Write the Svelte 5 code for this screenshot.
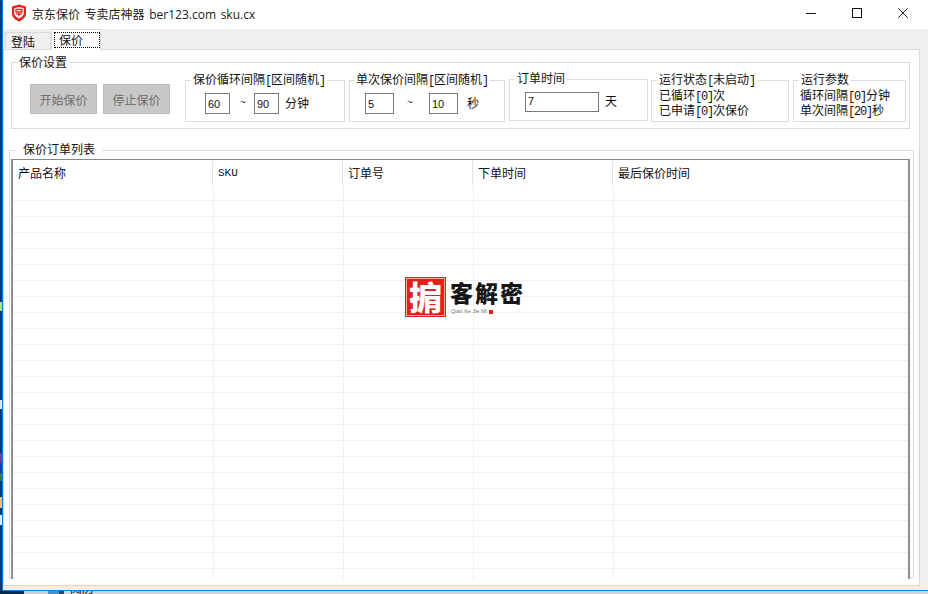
<script>
  const columns = [
    { label: "产品名称", width: 200 },
    { label: "SKU", width: 130, mono: true },
    { label: "订单号", width: 130 },
    { label: "下单时间", width: 140 },
    { label: "最后保价时间", width: 295 },
  ];
  const rows = Array.from({ length: 24 }, (_, i) => i);
  const bodyCols = [201, 130, 130, 140, 295];

  // SimSun-style half width latin: split ascii runs off so they get the mono font
  function segs(text) {
    return text.split(/([\x21-\x7e]+)/).filter(Boolean);
  }
  const isAscii = (s) => /^[\x21-\x7e]+$/.test(s);
</script>

{#snippet label(text)}
  {#each segs(text) as s}{#if isAscii(s)}<span class="m">{s}</span>{:else}{s}{/if}{/each}
{/snippet}

<div class="screen">
  <div class="window">
    <header class="titlebar">
      <svg class="appicon" width="16" height="18" viewBox="0 0 16 18">
        <path d="M1 2.5 L8 .5 L15 2.5 V10 C15 13.5 11 16 8 17.5 C5 16 1 13.5 1 10 Z" fill="#e2231a" />
        <path d="M3.2 4.2 L8 3 L12.8 4.2 V9.6 C12.8 11.8 10 13.6 8 14.6 C6 13.6 3.2 11.8 3.2 9.6 Z" fill="#fff" />
        <path d="M5 5.5 H11 V8 H5 Z M8 8 V12.5 M5.2 10 H10.8" stroke="#d8342a" stroke-width="1.3" fill="none" />
      </svg>
      <span class="title">京东保价 专卖店神器 ber123.com sku.cx</span>
      <div class="controls">
        <svg width="10" height="10" viewBox="0 0 10 10" shape-rendering="crispEdges"><path d="M0 5.5 H10" stroke="#111" /></svg>
        <svg width="10" height="10" viewBox="0 0 10 10" shape-rendering="crispEdges"><rect x=".5" y=".5" width="9" height="9" fill="none" stroke="#111" /></svg>
        <svg width="10" height="10" viewBox="0 0 10 10"><path d="M.3 .3 L9.7 9.7 M9.7 .3 L.3 9.7" stroke="#222" stroke-width="1" /></svg>
      </div>
    </header>

    <div class="client">
      <nav class="tabs">
        <div class="tab">登陆</div>
        <div class="tab active"><span class="focus">保价</span></div>
      </nav>

      <main class="page">
        <fieldset class="group settings">
          <legend>保价设置</legend>
          <div class="settings-row">
            <button class="btn" disabled>开始保价</button>
            <button class="btn" disabled>停止保价</button>

            <fieldset class="group sub g1">
              <legend>{@render label("保价循环间隔[区间随机]")}</legend>
              <div class="range">
                <input class="w25" value="60" />
                <span class="tilde">~</span>
                <input class="w25" value="90" />
                <span class="unit">分钟</span>
              </div>
            </fieldset>

            <fieldset class="group sub g2">
              <legend>{@render label("单次保价间隔[区间随机]")}</legend>
              <div class="range">
                <input class="w29" value="5" />
                <span class="tilde">~</span>
                <input class="w29" value="10" />
                <span class="unit">秒</span>
              </div>
            </fieldset>

            <fieldset class="group sub g3">
              <legend>订单时间</legend>
              <div class="range">
                <input class="w74" value="7" />
                <span class="unit">天</span>
              </div>
            </fieldset>

            <fieldset class="group sub g4">
              <legend>{@render label("运行状态[未启动]")}</legend>
              <p>{@render label("已循环[0]次")}</p>
              <p>{@render label("已申请[0]次保价")}</p>
            </fieldset>

            <fieldset class="group sub g5">
              <legend>运行参数</legend>
              <p>{@render label("循环间隔[0]分钟")}</p>
              <p>{@render label("单次间隔[20]秒")}</p>
            </fieldset>
          </div>
        </fieldset>

        <fieldset class="group orders">
          <legend>保价订单列表</legend>
          <div class="list">
            <div class="head">
              {#each columns as col}
                <div class="hcell" class:mono={col.mono} style="width: {col.width}px">{col.label}</div>
              {/each}
            </div>
            <div class="body">
              {#each rows as r}
                <div class="row">
                  {#each bodyCols as w}<div class="cell" style="width: {w}px"></div>{/each}
                </div>
              {/each}
              <div class="row tail">
                {#each bodyCols as w}<div class="cell" style="width: {w}px"></div>{/each}
              </div>
            </div>

            <div class="watermark">
              <div class="seal">掮</div>
              <div class="brand">
                <div class="brand-name">客解密</div>
                <div class="brand-sub">Qian Ke Jie Mi <i></i></div>
              </div>
            </div>
          </div>
        </fieldset>
      </main>
    </div>
  </div>

  <div class="desktop">
    <span class="d-navy"></span>
    <span class="d-gray"></span>
    <span class="d-blue"></span>
    <span class="d-dark"></span>
    <span class="d-text">阅历</span>
  </div>
</div>

<style>
  :global(body) {
    margin: 0;
    overflow: hidden;
  }

  .screen {
    width: 928px;
    height: 594px;
    display: flex;
    flex-direction: column;
    overflow: hidden;
    font-family: "Noto Sans CJK SC", "Liberation Sans", sans-serif;
    font-size: 12px;
    color: #111;
    background: #d6d6d6;
  }

  .window {
    height: 591px;
    box-sizing: border-box;
    display: flex;
    flex-direction: column;
    border-left: 3px solid #0078d7;
    border-bottom: 1px solid #0f84dc;
    position: relative;
  }

  /* bit of desktop showing behind the window edge */
  .window::before {
    content: "";
    position: absolute;
    left: -3px;
    top: 0;
    bottom: -1px;
    width: 2px;
    background: linear-gradient(
      #0b3a72 0 302px, #b9e07a 302px 311px, #0b3a72 311px 400px, #dfe6ee 400px 409px,
      #0b3a72 409px 453px, #6c3f8a 453px 463px, #1c34c8 463px 473px, #1d8a2c 473px 481px,
      #0b3a72 481px 497px, #f0c080 497px 508px, #0b3a72 508px 515px, #e8edf2 515px 525px,
      #0b3a72 525px
    );
  }

  .titlebar {
    height: 29px;
    flex: none;
    display: flex;
    align-items: center;
    background: #fff;
    padding-left: 8px;
  }

  .appicon {
    margin-top: -3px;
  }

  .title {
    margin-left: 5px;
    margin-top: -2px;
    font-family: "Open Sans", "Noto Sans CJK SC", sans-serif;
    color: #222;
    white-space: pre;
    word-spacing: 1.5px;
  }

  .controls {
    margin-left: auto;
    display: flex;
    gap: 36px;
    margin-right: 20px;
    margin-top: -3px;
  }

  .client {
    flex: 1;
    display: flex;
    flex-direction: column;
    background: #f0f0f0;
    min-height: 0;
  }

  .tabs {
    height: 20px;
    flex: none;
    display: flex;
    align-items: flex-end;
    padding-left: 2px;
    position: relative;
    z-index: 1;
  }

  .tab {
    width: 46px;
    height: 17px;
    box-sizing: border-box;
    padding-left: 5px;
    line-height: 17px;
    background: #f0f0f0;
    border: 1px solid #d9d9d9;
    border-bottom: 0;
  }

  .tab.active {
    width: 50px;
    height: 21px;
    margin-bottom: -1px;
    background: #fff;
    padding: 2px 0 0 2px;
    line-height: 15px;
  }

  .focus {
    display: block;
    width: 46px;
    height: 16px;
    box-sizing: border-box;
    padding-left: 4px;
    line-height: 13px;
    border: 1px dotted #000;
  }

  .page {
    width: 917px;
    height: 537px;
    box-sizing: border-box;
    flex: none;
    background: #fff;
    border: 1px solid #d9d9d9;
    padding: 5px 0 0 5px;
  }

  fieldset {
    margin: 0;
    padding: 0;
    min-width: 0;
    box-sizing: border-box;
  }

  .group {
    border: 1px solid #dcdcdc;
  }

  legend {
    padding: 0 2px;
    margin-left: 5px;
    line-height: 14px;
    height: 14px;
    white-space: nowrap;
  }

  .settings {
    width: 899px;
    height: 74px;
    margin-left: 2px;
  }

  .settings-row {
    display: flex;
    align-items: flex-start;
    padding: 5px 0 0 18px;
    margin-top: -1px;
  }

  .btn {
    width: 67px;
    height: 30px;
    margin: 11px 6px 0 0;
    padding: 0;
    font: inherit;
    color: #6d6d6d;
    background: #c8c8c8;
    border: 1px solid #bcbcbc;
  }

  .sub {
    margin-top: 0;
    height: 49px;
  }

  .sub legend,
  .orders legend {
    line-height: 12px;
  }

  .sub + .sub {
    margin-left: 4px;
  }

  .g1 {
    width: 160px;
    margin-left: 9px;
  }

  .g2 {
    width: 156px;
  }

  .g2 legend {
    margin-left: 4px;
  }

  .g3 {
    width: 139px;
    margin-top: -1px;
  }

  .sub.g4 {
    width: 138px;
    margin-left: 3px;
  }

  .g5 {
    width: 113px;
  }

  .sub p {
    margin: 0 0 0 7px;
    height: 15px;
    line-height: 15px;
    white-space: nowrap;
  }

  .g5 p {
    margin-left: 6px;
  }

  .m {
    font-family: "Liberation Mono", monospace;
    letter-spacing: -1.2px;
  }

  .range {
    display: flex;
    align-items: center;
    padding: 6px 0 0 19px;
  }

  .g2 .range,
  .g3 .range {
    padding-left: 15px;
  }

  input {
    height: 21px;
    box-sizing: border-box;
    padding: 0 2px;
    margin: 0;
    font-family: "Liberation Sans", sans-serif;
    font-size: 11px;
    color: #111;
    background: #fff;
    border: 1px solid #7a7a7a;
    outline: 0;
    border-radius: 0;
  }

  .w25 {
    width: 25px;
  }

  .w29 {
    width: 29px;
  }

  .w74 {
    width: 74px;
    height: 20px;
    padding-bottom: 3px;
  }

  .tilde {
    width: 24px;
    text-align: center;
    font-family: "Liberation Mono", monospace;
    font-size: 10px;
    color: #333;
  }

  .g1 .tilde {
    padding-left: 2px;
    box-sizing: border-box;
  }

  .g2 .tilde {
    width: 35px;
    padding-right: 3px;
    box-sizing: border-box;
  }

  .unit {
    margin: -3px 0 0 6px;
  }

  .g2 .unit {
    margin-left: 9px;
  }

  .orders {
    width: 905px;
    height: 435px;
    margin-top: 14px;
  }

  .orders legend {
    margin-left: 6px;
    padding: 0 7px;
  }

  .list {
    position: relative;
    width: 899px;
    height: 420px;
    margin: 2px 0 -2px 1px;
    box-sizing: border-box;
    background: #fff;
    border-top: 1px solid #828790;
    border-left: 2px solid #8f8f8f;
    border-right: 2px solid #8f8f8f;
    display: flex;
    flex-direction: column;
    overflow: hidden;
  }

  .head {
    height: 25px;
    flex: none;
    display: flex;
    padding-top: 1px;
    box-sizing: border-box;
  }

  .hcell {
    box-sizing: border-box;
    height: 24px;
    flex: none;
    padding-left: 5px;
    line-height: 24px;
    border-right: 1px solid #e3e3e3;
    white-space: nowrap;
  }

  .hcell.mono {
    font-family: "Liberation Mono", monospace;
    font-size: 11px;
  }

  .hcell:last-child {
    border-right: 0;
  }

  .row {
    display: flex;
    height: 16px;
  }

  .cell {
    box-sizing: border-box;
    flex: none;
    height: 100%;
    border-right: 1px solid #f0f0f0;
    border-bottom: 1px solid #f0f0f0;
  }

  .cell:last-child {
    border-right: 0;
  }

  .tail .cell {
    border-bottom: 0;
  }

  .watermark {
    position: absolute;
    left: 392px;
    top: 117px;
    display: flex;
    gap: 4px;
  }

  .seal {
    width: 41px;
    height: 40px;
    box-sizing: border-box;
    background: #e4201c;
    border: 1px solid #e4201c;
    box-shadow: inset 0 0 0 1px #f4a8a4;
    color: #fff;
    font-size: 33px;
    font-weight: 900;
    line-height: 36px;
    text-align: center;
  }

  .brand {
    padding-top: 2px;
  }

  .brand-name {
    font-size: 23px;
    font-weight: 900;
    line-height: 26px;
    letter-spacing: 2px;
    color: #161616;
    white-space: nowrap;
  }

  .brand-sub {
    display: flex;
    align-items: center;
    gap: 2px;
    margin-top: 3px;
    padding-left: 1px;
    font-family: "Liberation Sans", sans-serif;
    font-size: 5.5px;
    line-height: 7px;
    color: #777;
    white-space: nowrap;
  }

  .brand-sub i {
    width: 4px;
    height: 4px;
    background: #e4201c;
  }

  .desktop {
    flex: 1;
    display: flex;
    background: #d4d4d4;
    overflow: hidden;
  }

  .desktop span {
    flex: none;
    height: 3px;
  }

  .d-navy {
    width: 24px;
    background: #0a2a4c;
  }

  .d-gray {
    width: 24px;
    background: #cfcfcf;
  }

  .d-blue {
    width: 11px;
    background: #4a90c8;
  }

  .d-dark {
    width: 5px;
    background: #2c4a66;
  }

  .desktop .d-text {
    margin: -9px 0 0 6px;
    font-size: 12px;
    line-height: 12px;
    height: 12px;
    color: #111;
  }
</style>
